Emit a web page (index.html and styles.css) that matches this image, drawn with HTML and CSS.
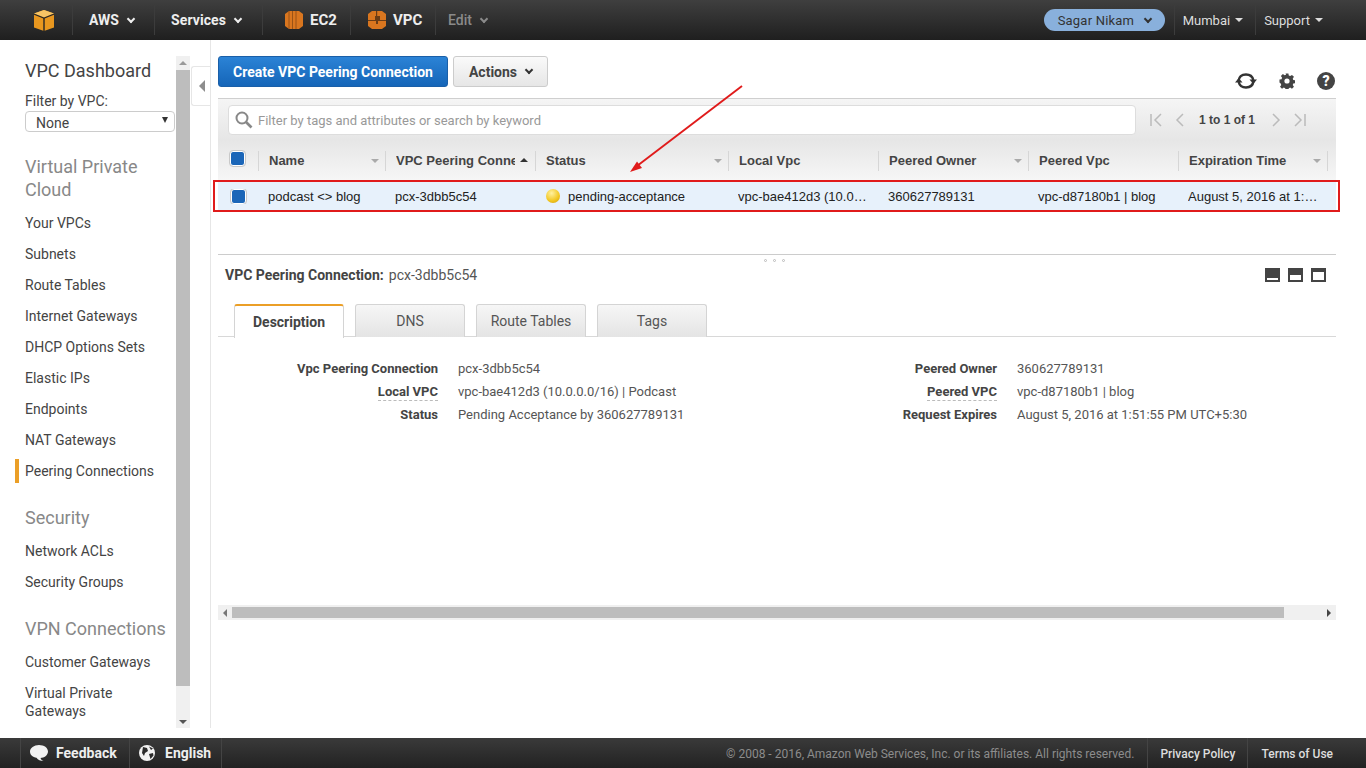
FILE: index.html
```html
<!DOCTYPE html>
<html lang="en">
<head>
    <meta charset="UTF-8">
    <title>VPC Management Console</title>
    <link rel="stylesheet" href="styles.css">
</head>
<body>
    <header class="topbar">
        <div class="nav-item logo-item">
            <svg width="24" height="24" viewBox="0 0 24 24"><path d="M12 2l10 3.600v14L12 23 2 19.600v-14z" fill="#e8971f"/><path d="M12 2l10 3.600-10 3.800L2 5.600z" fill="#f7c465"/><path d="M11.300 10v13h1.400V10z" fill="#262626"/><path d="M2 5.600l10 3.800 10-3.800v1.200L12 10.700 2 6.800z" fill="#262626"/></svg>
        </div>
        <div class="nav-item aws-item">AWS <span class="chev"></span></div>
        <div class="nav-item services-item">Services <span class="chev"></span></div>
        <div class="nav-item service-item ec2-item">
            <svg width="18" height="20" viewBox="0 0 18 20"><path d="M4 1h10l4 3v12l-4 3H4l-4-3V4z" fill="#d9761f"/><path d="M4 1v18M7.500 1v18M11 1v18" stroke="#8a4a14" stroke-width=".8"/></svg>
            EC2
        </div>
        <div class="nav-item service-item vpc-item">
            <svg width="18" height="20" viewBox="0 0 18 20"><path d="M4 1h10l4 3v12l-4 3H4l-4-3V4z" fill="#d9761f"/><path d="M0 10h7V6h5v4h6v1h-8v3H8v-3H0z" fill="#6b3d16"/><rect x="8" y="1" width="1.200" height="5" fill="#6b3d16"/></svg>
            VPC
        </div>
        <div class="nav-item edit-item">Edit <span class="chev"></span></div>
        <div class="topbar-right">
            <div class="user-pill">Sagar Nikam <span class="chev dark"></span></div>
            <div class="nav-right">Mumbai <span class="caret"></span></div>
            <div class="nav-right">Support <span class="caret"></span></div>
        </div>
    </header>

    <div class="page">
        <aside class="sidebar">
            <div class="side-scroll">
                <h2 class="side-head">VPC Dashboard</h2>
                <div class="filter-label">Filter by VPC:</div>
                <div class="filter-select">None<span class="select-arrow"></span></div>

                <h3 class="side-title first">Virtual Private Cloud</h3>
                <a class="side-link">Your VPCs</a>
                <a class="side-link">Subnets</a>
                <a class="side-link">Route Tables</a>
                <a class="side-link">Internet Gateways</a>
                <a class="side-link">DHCP Options Sets</a>
                <a class="side-link">Elastic IPs</a>
                <a class="side-link">Endpoints</a>
                <a class="side-link">NAT Gateways</a>
                <a class="side-link active">Peering Connections</a>

                <h3 class="side-title">Security</h3>
                <a class="side-link">Network ACLs</a>
                <a class="side-link">Security Groups</a>

                <h3 class="side-title">VPN Connections</h3>
                <a class="side-link">Customer Gateways</a>
                <a class="side-link wrap">Virtual Private Gateways</a>
            </div>
            <div class="scrollbar-v">
                <span class="sb-up"></span>
                <span class="sb-thumb"></span>
                <span class="sb-down"></span>
            </div>
        </aside>
        <div class="collapse-col">
            <div class="collapse-btn"><span class="collapse-arrow"></span></div>
        </div>

        <main class="content">
            <div class="actions">
                <button class="btn-primary">Create VPC Peering Connection</button>
                <button class="btn-default">Actions <span class="chev dark"></span></button>
                <div class="action-icons">
                    <svg width="22" height="18" viewBox="0 0 22 18"><path d="M3.500 9C4 5 7 2.500 11 2.500c3.500 0 6.500 2 7.300 5.500" fill="none" stroke="#333" stroke-width="2.400"/><path d="M14.500 7.500h7.500l-3.700 4.500z" fill="#333"/><path d="M18.500 9c-.5 4-3.500 6.500-7.500 6.500-3.500 0-6.500-2-7.300-5.500" fill="none" stroke="#333" stroke-width="2.400"/><path d="M7.500 10.500H0l3.700-4.500z" fill="#333"/></svg>
                    <svg width="16" height="16" viewBox="0 0 16 16"><path d="M6.500 0h3l.4 2.200 1.500.6 1.900-1.300 2.100 2.100-1.300 1.900.6 1.500 2.200.4v3l-2.200.4-.6 1.500 1.300 1.900-2.100 2.100-1.900-1.300-1.500.6-.4 2.200h-3l-.4-2.200-1.500-.6-1.900 1.300-2.100-2.100 1.300-1.900-.6-1.500L0 9.500v-3l2.200-.4.6-1.500-1.300-1.900 2.100-2.100 1.900 1.300 1.500-.6z" fill="#444" transform="scale(.94) translate(.5 .5)"/><circle cx="8" cy="8" r="2.600" fill="#fff"/></svg>
                    <span class="help-icon">?</span>
                </div>
            </div>

            <div class="filter-bar">
                <div class="search-box">
                    <svg width="18" height="18" viewBox="0 0 18 18"><circle cx="7" cy="7" r="5.500" fill="none" stroke="#888" stroke-width="2"/><path d="M11 11l5.500 5.500" stroke="#888" stroke-width="2.600"/></svg>
                    <span class="search-text">Filter by tags and attributes or search by keyword</span>
                </div>
                <div class="pager">
                    <svg width="14" height="14" viewBox="0 0 14 14"><path d="M2 1v12M12 1L6 7l6 6" fill="none" stroke="#bbb" stroke-width="1.500"/></svg>
                    <svg width="10" height="14" viewBox="0 0 10 14"><path d="M8 1L2 7l6 6" fill="none" stroke="#bbb" stroke-width="1.500"/></svg>
                    <span class="pager-text">1 to 1 of 1</span>
                    <svg width="10" height="14" viewBox="0 0 10 14"><path d="M2 1l6 6-6 6" fill="none" stroke="#bbb" stroke-width="1.500"/></svg>
                    <svg width="14" height="14" viewBox="0 0 14 14"><path d="M12 1v12M2 1l6 6-6 6" fill="none" stroke="#bbb" stroke-width="1.500"/></svg>
                </div>
            </div>

            <div class="grid-table">
                <div class="grid-row grid-head">
                    <div class="cell check-cell"><span class="check"></span></div>
                    <div class="cell">Name<span class="sort"></span></div>
                    <div class="cell"><span class="clip">VPC Peering Connection</span><span class="sort up"></span></div>
                    <div class="cell">Status<span class="sort"></span></div>
                    <div class="cell">Local Vpc</div>
                    <div class="cell">Peered Owner<span class="sort"></span></div>
                    <div class="cell">Peered Vpc</div>
                    <div class="cell">Expiration Time<span class="sort"></span></div>
                    <div class="cell tail"></div>
                </div>
                <div class="grid-row grid-body">
                    <div class="cell check-cell"><span class="check"></span></div>
                    <div class="cell">podcast &lt;&gt; blog</div>
                    <div class="cell">pcx-3dbb5c54</div>
                    <div class="cell"><span class="dot"></span>pending-acceptance</div>
                    <div class="cell"><span class="clip">vpc-bae412d3 (10.0.0.0/16) | Podcast</span></div>
                    <div class="cell">360627789131</div>
                    <div class="cell">vpc-d87180b1 | blog</div>
                    <div class="cell"><span class="clip wide">August 5, 2016 at 1:51:55 PM</span></div>
                    <div class="cell tail"></div>
                </div>
                <div class="row-highlight"></div>
            </div>

            <section class="detail">
                <div class="splitter"><span></span><span></span><span></span></div>
                <div class="detail-head">
                    <b>VPC Peering Connection:</b> pcx-3dbb5c54
                    <div class="panel-icons">
                        <span class="panel-icon small"></span>
                        <span class="panel-icon medium"></span>
                        <span class="panel-icon large"></span>
                    </div>
                </div>
                <div class="tabs">
                    <div class="tab active">Description</div>
                    <div class="tab">DNS</div>
                    <div class="tab">Route Tables</div>
                    <div class="tab">Tags</div>
                </div>
                <div class="props">
                    <dl class="prop-col left">
                        <dt>Vpc Peering Connection</dt><dd>pcx-3dbb5c54</dd>
                        <dt><span class="dashed">Local VPC</span></dt><dd>vpc-bae412d3 (10.0.0.0/16) | Podcast</dd>
                        <dt>Status</dt><dd>Pending Acceptance by 360627789131</dd>
                    </dl>
                    <dl class="prop-col right">
                        <dt>Peered Owner</dt><dd>360627789131</dd>
                        <dt><span class="dashed">Peered VPC</span></dt><dd>vpc-d87180b1 | blog</dd>
                        <dt>Request Expires</dt><dd>August 5, 2016 at 1:51:55 PM UTC+5:30</dd>
                    </dl>
                </div>
            </section>

            <div class="scrollbar-h">
                <span class="sb-left"></span>
                <span class="sb-thumb-h"></span>
                <span class="sb-right"></span>
            </div>

            <svg class="arrow" width="125" height="100" viewBox="0 0 125 100"><path d="M119 2L14 82" stroke="#e01b1b" stroke-width="2" fill="none"/><path d="M7 88l7-10.500 5 6.400z" fill="#e01b1b"/></svg>
        </main>
    </div>

    <footer class="footbar">
        <div class="foot-item feedback">
            <svg width="20" height="18" viewBox="0 0 20 18"><path d="M10 1c5 0 9 2.800 9 6.500S15 14 11.500 14c.5 1.500 1.500 2.500 3 3-3 0-5.500-1-7-3.200C4 13.300 1 11 1 7.500S5 1 10 1z" fill="#f2f2f2"/></svg>
            Feedback
        </div>
        <div class="foot-item language">
            <svg width="16" height="16" viewBox="0 0 16 16"><circle cx="8" cy="8" r="8" fill="#f2f2f2"/><path d="M4 2l4 1 1 3-3 2-1 3-2-3zM10 9l4-1 .5 2.500-3 3.500zM10 1.500l4 2-2 1.500z" fill="#2b2b2b"/></svg>
            English
        </div>
        <div class="copyright">© 2008 - 2016, Amazon Web Services, Inc. or its affiliates. All rights reserved.</div>
        <div class="foot-link privacy">Privacy Policy</div>
        <div class="foot-link">Terms of Use</div>
    </footer>
</body>
</html>
```

FILE: styles.css
```css
* {
    box-sizing: border-box;
}
html, body {
    margin: 0;
    height: 100%;
}
body {
    display: flex;
    flex-direction: column;
    height: 100vh;
    overflow: hidden;
    font-family: Roboto, sans-serif;
    font-size: 14px;
    color: #444;
    background: #fff;
}

/* top bar */
.topbar {
    height: 40px;
    flex: none;
    display: flex;
    align-items: center;
    padding-left: 20px;
    background: linear-gradient(#3f3f3f, #1f1f1f);
    color: #eee;
    font-weight: 700;
}
.nav-item {
    height: 30px;
    display: flex;
    align-items: center;
    border-right: 1px solid #3c3c3c;
    white-space: nowrap;
}
.logo-item {
    width: 53px;
    padding-left: 12px;
}
.aws-item {
    width: 82px;
    padding-left: 16px;
    gap: 9px;
}
.services-item {
    width: 108px;
    padding-left: 16px;
    gap: 9px;
    letter-spacing: .1px;
}
.service-item {
    gap: 7px;
    font-size: 15px;
}
.ec2-item {
    width: 88px;
    padding-left: 22px;
}
.vpc-item {
    width: 85px;
    padding-left: 17px;
}
.edit-item {
    padding-left: 12px;
    border: 0;
    color: #8a8a8a;
    gap: 9px;
    font-weight: 500;
}
.chev {
    display: inline-block;
    width: 6px;
    height: 6px;
    margin-top: -3px;
    border-right: 2px solid currentColor;
    border-bottom: 2px solid currentColor;
    transform: rotate(45deg);
}
.chev.dark {
    color: #333;
}
.topbar-right {
    margin-left: auto;
    margin-right: 43px;
    display: flex;
    align-items: center;
    font-weight: 400;
    font-size: 13px;
}
.user-pill {
    width: 121px;
    height: 22px;
    margin-right: 9px;
    padding-left: 14px;
    display: flex;
    align-items: center;
    gap: 11px;
    border-radius: 11px;
    background: #89b0dc;
    color: #333;
    letter-spacing: .2px;
}
.nav-right {
    height: 30px;
    display: flex;
    align-items: center;
    gap: 5px;
    padding: 0 12px 0 8px;
    border-left: 1px solid #3c3c3c;
    color: #ddd;
}
.nav-right:last-child {
    padding-right: 0;
}
.caret {
    width: 0;
    height: 0;
    border: 4px solid transparent;
    border-top-color: #ddd;
    border-bottom: 0;
}

/* page */
.page {
    flex: 1;
    min-height: 0;
    display: flex;
}

/* sidebar */
.sidebar {
    width: 191px;
    flex: none;
    padding-top: 16px;
    display: flex;
}
.side-scroll {
    width: 176px;
    padding: 1px 0 0 25px;
}
.side-head {
    margin: 0;
    font-size: 18px;
    line-height: 28px;
    font-weight: 400;
}
.filter-label {
    margin-top: 8px;
    line-height: 16px;
}
.filter-select {
    position: relative;
    width: 150px;
    height: 21px;
    padding-left: 10px;
    margin-top: 2px;
    line-height: 22px;
    border: 1px solid #ccc;
    border-radius: 4px;
}
.select-arrow {
    position: absolute;
    right: 6px;
    top: 5px;
    border: 3.500px solid transparent;
    border-top: 6px solid #333;
    border-bottom: 0;
}
.side-title {
    margin: 26px 0 0;
    font-size: 18px;
    line-height: 23px;
    font-weight: 400;
    color: #888;
}
.side-title.first {
    margin-top: 23px;
    width: 130px;
}
.side-title + .side-link {
    margin-top: 13px;
}
.side-link {
    display: block;
    position: relative;
    line-height: 18px;
    margin-top: 13px;
    color: #444;
}
.side-link.wrap {
    width: 120px;
}
.side-link.active::before {
    content: "";
    position: absolute;
    left: -10px;
    top: -3px;
    width: 4px;
    height: 24px;
    background: #eb9f27;
}
.scrollbar-v {
    width: 14px;
    height: 672px;
    display: flex;
    flex-direction: column;
    background: #f0f0f0;
}
.sb-up, .sb-down {
    height: 14px;
    flex: none;
    position: relative;
}
.sb-up::after, .sb-down::after {
    content: "";
    position: absolute;
    left: 3px;
    top: 5px;
    border: 4px solid transparent;
    border-top: 0;
    border-bottom: 4px solid #999;
}
.sb-down::after {
    top: 6px;
    border-bottom: 0;
    border-top: 4px solid #555;
}
.sb-thumb {
    height: 616px;
    background: #bdbdbd;
}
.sb-down {
    margin-top: auto;
}
.collapse-col {
    width: 20px;
    flex: none;
    height: 688px;
    padding-top: 26px;
    border-right: 1px solid #e6e6e6;
}
.collapse-btn {
    width: 20px;
    height: 40px;
    display: flex;
    align-items: center;
    justify-content: center;
    border: 1px solid #e6e6e6;
    border-right: 0;
    border-radius: 3px 0 0 3px;
}
.collapse-arrow {
    border: 6px solid transparent;
    border-left: 0;
    border-right: 6px solid #8d8d8d;
}

/* main */
.content {
    position: relative;
    flex: 1;
    min-width: 0;
    margin: 0 30px 0 7px;
    padding-top: 16px;
}
.actions {
    height: 42px;
    display: flex;
    align-items: flex-start;
    gap: 5px;
}
.btn-primary, .btn-default {
    height: 31px;
    border-radius: 3px;
    font-family: Roboto, sans-serif;
    font-size: 14px;
    font-weight: 700;
}
.btn-primary {
    width: 230px;
    color: #fff;
    border: 1px solid #1a5fa8;
    background: linear-gradient(#2b83d6, #1565b8);
}
.btn-default {
    width: 95px;
    display: flex;
    align-items: center;
    justify-content: center;
    gap: 9px;
    color: #444;
    border: 1px solid #ccc;
    background: linear-gradient(#fafafa, #e6e6e6);
}
.action-icons {
    margin-left: auto;
    margin-top: 16px;
    display: flex;
    align-items: center;
    gap: 22px;
    padding-right: 1px;
}
.help-icon {
    width: 18px;
    height: 18px;
    border-radius: 50%;
    background: #444;
    color: #fff;
    font-size: 14px;
    font-weight: 900;
    line-height: 18px;
    text-align: center;
}

.filter-bar {
    height: 42px;
    display: flex;
    align-items: center;
    padding-left: 10px;
    border-top: 1px solid #cfcfcf;
    background: linear-gradient(#f5f5f5, #e6e6e6);
    font-family: "Liberation Sans", Arial, sans-serif;
}
.search-box {
    width: 908px;
    height: 30px;
    display: flex;
    align-items: center;
    gap: 5px;
    padding-left: 6px;
    border: 1px solid #ddd;
    border-radius: 4px;
    background: #fff;
    font-family: Roboto, sans-serif;
    font-size: 13px;
    color: #999;
}
.search-text {
    padding-top: 2px;
}
.pager {
    display: flex;
    align-items: center;
    margin-left: 13px;
    gap: 12px;
    font-size: 12px;
    font-weight: 700;
    color: #444;
}
.pager-text {
    margin: 0 4px 0 2px;
}

/* table */
.grid-table {
    position: relative;
    height: 114px;
    font-family: "Liberation Sans", Arial, sans-serif;
    font-size: 13px;
}
.grid-row {
    display: grid;
    grid-template-columns: 40px 127px 150px 193px 150px 150px 150px 149px 9px;
    align-items: center;
}
.grid-head {
    height: 40px;
    padding-top: 2px;
    font-weight: 700;
    color: #444;
    background: linear-gradient(#e6e6e6, #f6f6f6);
}
.grid-head .cell {
    position: relative;
    height: 20px;
    line-height: 20px;
    padding: 0 10px;
    border-left: 1px solid #d6d6d6;
}
.grid-head .check-cell {
    border-left: 0;
}
.grid-head .tail {
    padding: 0;
}
.grid-body {
    height: 32px;
    color: #222;
    background: #e7f1fb;
}
.grid-body .cell {
    padding: 0 10px;
    white-space: nowrap;
    overflow: hidden;
}
.check-cell.cell {
    padding: 0 0 0 12px;
}
.check {
    display: block;
    width: 15px;
    height: 15px;
    border: 1px solid #fff;
    outline: 1px solid #c8c8c8;
    border-radius: 3px;
    background: #1b66b8;
}
.grid-body .check {
    margin-left: 1px;
}
.clip {
    display: block;
    overflow: hidden;
    white-space: nowrap;
}
.grid-head .cell .clip {
    width: 119px;
}
.grid-body .cell .clip {
    text-overflow: ellipsis;
    width: 129px;
}
.grid-body .cell .clip.wide {
    width: 131px;
}
.sort {
    position: absolute;
    right: 6px;
    top: 8px;
    border: 4px solid transparent;
    border-top: 4px solid #aaa;
    border-bottom: 0;
}
.sort.up {
    top: 7px;
    right: 7px;
    border-top: 0;
    border-bottom: 4px solid #333;
}
.dot {
    display: inline-block;
    width: 14px;
    height: 14px;
    margin: 0 8px 0 1px;
    vertical-align: -2px;
    border-radius: 50%;
    background: radial-gradient(circle at 40% 30%, #fff1a0, #f2c61f 60%, #c99a10);
}
.row-highlight {
    position: absolute;
    left: -5px;
    right: -4px;
    top: 40px;
    height: 32px;
    border: 2px solid #e01b1b;
}

/* details */
.detail {
    position: relative;
    height: 351px;
    border-top: 1px solid #ccc;
}
.splitter {
    position: absolute;
    top: 4px;
    left: 546px;
    display: flex;
    gap: 6px;
}
.splitter span {
    width: 3px;
    height: 3px;
    border: 1px solid #bbb;
    border-radius: 50%;
}
.detail-head {
    display: flex;
    align-items: center;
    height: 40px;
    padding-left: 7px;
    gap: 5px;
    color: #555;
}
.detail-head b {
    color: #444;
    font-weight: 700;
}
.panel-icons {
    margin-left: auto;
    margin-right: 10px;
    display: flex;
    gap: 8px;
}
.panel-icon {
    display: block;
    width: 15px;
    height: 14px;
    background: #444;
    position: relative;
}
.panel-icon::after {
    content: "";
    position: absolute;
    left: 2px;
    right: 2px;
    bottom: 2px;
    background: #fff;
}
.panel-icon.small::after {
    height: 2px;
}
.panel-icon.medium::after {
    height: 5px;
}
.panel-icon.large::after {
    height: 8px;
}
.tabs {
    display: flex;
    gap: 11px;
    height: 33px;
    margin-top: 9px;
    padding-left: 16px;
    border-bottom: 1px solid #d8d8d8;
}
.tab {
    width: 110px;
    height: 33px;
    line-height: 32px;
    text-align: center;
    border: 1px solid #d4d4d4;
    border-bottom: 0;
    border-radius: 3px 3px 0 0;
    background: linear-gradient(#f6f6f6, #e4e4e4);
    color: #555;
}
.tab.active {
    height: 34px;
    line-height: 33px;
    background: #fff;
    border-top: 2px solid #eb9f27;
    color: #444;
    font-weight: 700;
}
.props {
    display: flex;
    padding-top: 23px;
}
.prop-col {
    margin: 0;
    display: grid;
    row-gap: 5px;
    font-size: 13px;
    line-height: 18px;
}
.prop-col.left {
    width: 559px;
    grid-template-columns: 220px 1fr;
}
.prop-col.right {
    grid-template-columns: 220px 1fr;
}
.prop-col dt {
    text-align: right;
    font-weight: 700;
    color: #444;
}
.prop-col dd {
    margin: 0;
    padding-left: 20px;
    color: #555;
    white-space: nowrap;
}
.dashed {
    border-bottom: 1px dashed #bbb;
    padding-bottom: 1px;
}

.scrollbar-h {
    height: 15px;
    display: flex;
    align-items: center;
    background: #f0f0f0;
}
.sb-left, .sb-right {
    width: 14px;
    height: 15px;
    flex: none;
    position: relative;
}
.sb-left::after, .sb-right::after {
    content: "";
    position: absolute;
    top: 4px;
    left: 5px;
    border: 4px solid transparent;
    border-left: 0;
    border-right: 4px solid #777;
}
.sb-right::after {
    border-right: 0;
    border-left: 4px solid #444;
}
.sb-thumb-h {
    width: 1052px;
    height: 11px;
    background: #bdbdbd;
}
.sb-right {
    margin-left: auto;
}
.arrow {
    position: absolute;
    left: 405px;
    top: 44px;
}

/* footer */
.footbar {
    height: 30px;
    flex: none;
    display: flex;
    align-items: center;
    padding-left: 20px;
    padding-right: 20px;
    background: linear-gradient(#3a3a3a, #222);
    color: #eee;
    font-weight: 700;
}
.foot-item {
    height: 30px;
    display: flex;
    align-items: center;
    gap: 7px;
    border-left: 1px solid #444;
}
.feedback {
    width: 109px;
    padding-left: 8px;
}
.language {
    width: 93px;
    padding-left: 9px;
    gap: 10px;
    border-right: 1px solid #444;
}
.copyright {
    margin-left: auto;
    padding-top: 1px;
    font-size: 12px;
    font-weight: 400;
    color: #8c8c8c;
    padding-right: 13px;
}
.foot-link {
    height: 30px;
    padding: 1px 13px 0;
    display: flex;
    align-items: center;
    border-left: 1px solid #444;
    font-size: 12px;
    font-weight: 500;
    color: #ddd;
}
.foot-link.privacy {
    padding: 1px 12px 0;
}
```
